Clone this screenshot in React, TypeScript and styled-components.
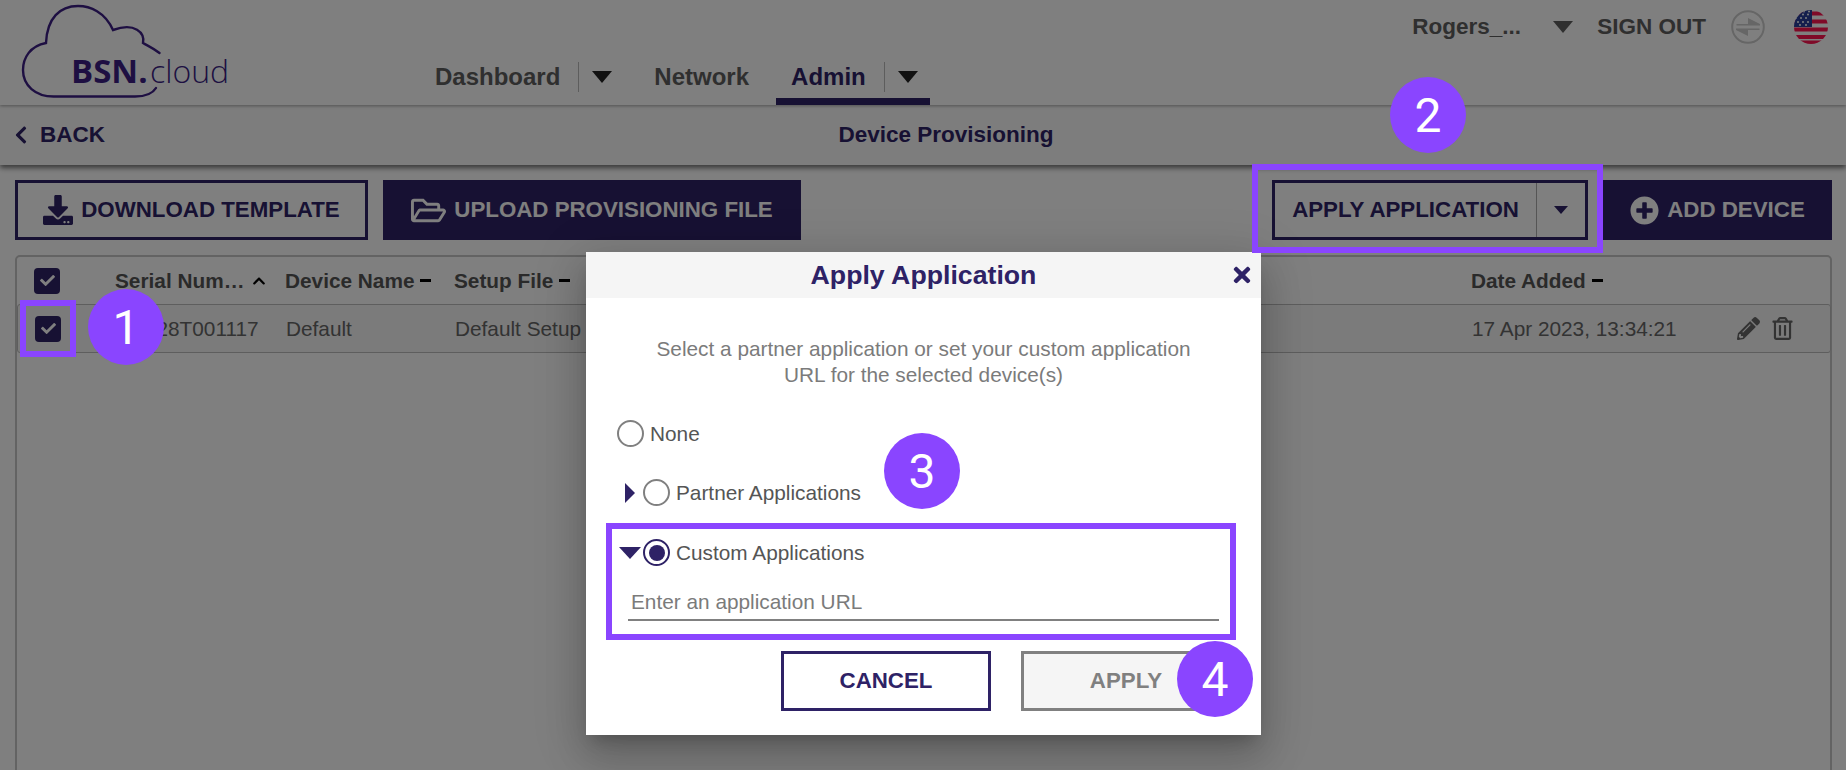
import React from "react";
import styled, { createGlobalStyle } from "styled-components";
import {
  FaCheck,
  FaChevronLeft,
  FaChevronUp,
  FaDownload,
  FaPencilAlt,
  FaPlusCircle,
  FaRegFolderOpen,
  FaRegTrashAlt,
  FaTimes,
} from "react-icons/fa";

const NAVY = "#2e2266";
const PURPLE = "#8a45ff";
const COLUMNS = "98px 170px 169px 1017px 265px 1fr";

const Global = createGlobalStyle`
  html, body { margin: 0; padding: 0; background: #fff; }
  body { font-family: "Liberation Sans", Arial, sans-serif; }
  * { box-sizing: border-box; }
`;

const Page = styled.div`
  position: relative;
  width: 1846px;
  height: 770px;
  overflow: hidden;
  background: #fff;
`;

const TopBar = styled.header`
  display: flex;
  height: 105px;
  background: #fff;
  box-shadow: 0 1px 3px rgba(0, 0, 0, 0.35);
  position: relative;
  z-index: 2;
`;

const LogoSvg = styled.svg`
  flex: none;
  width: 260px;
  height: 105px;
`;

const Nav = styled.nav`
  display: flex;
  align-self: flex-end;
  gap: 15px;
  margin-left: 160px;
`;

const Tab = styled.div<{ $active?: boolean }>`
  display: flex;
  align-items: center;
  height: 51px;
  padding: 2px 12px 0 15px;
  border-bottom: 7px solid ${(p) => (p.$active ? NAVY : "transparent")};
  color: ${(p) => (p.$active ? NAVY : "#5e5e5e")};
  font-size: 24px;
  font-weight: 700;
`;

const TabDivider = styled.span`
  width: 1px;
  height: 30px;
  margin: 0 13px 0 18px;
  background: #bbb;
`;

const Caret = styled.span<{ $w: number; $h: number; $color: string; $dir?: "down" | "right" }>`
  display: inline-block;
  flex: none;
  width: 0;
  height: 0;
  ${(p) =>
    p.$dir === "right"
      ? `border-top: ${p.$w / 2}px solid transparent;
         border-bottom: ${p.$w / 2}px solid transparent;
         border-left: ${p.$h}px solid ${p.$color};`
      : `border-left: ${p.$w / 2}px solid transparent;
         border-right: ${p.$w / 2}px solid transparent;
         border-top: ${p.$h}px solid ${p.$color};`}
`;

const UserArea = styled.div`
  display: flex;
  align-items: center;
  align-self: flex-start;
  height: 54px;
  margin-left: auto;
  padding-right: 18px;
  color: #5e5e5e;
  font-size: 22.5px;
  font-weight: 700;
`;

const UserName = styled.span`
  width: 141px;
`;

const SignOut = styled.span`
  margin: 0 25px 0 24px;
`;

const RoundIcon = styled.svg`
  display: block;
  width: 34px;
  height: 34px;
  flex: none;
`;

const FlagIcon = styled(RoundIcon)`
  margin-left: 29px;
`;

const SubBar = styled.div`
  display: flex;
  align-items: center;
  height: 60px;
  background: #fafafa;
  box-shadow: 0 3px 5px rgba(0, 0, 0, 0.55);
  position: relative;
  z-index: 1;
`;

const Back = styled.div`
  display: flex;
  align-items: center;
  flex: none;
  width: 106px;
  padding-left: 11px;
  gap: 9px;
  color: ${NAVY};
  font-size: 22.5px;
  font-weight: 700;
`;

const PageTitle = styled.div`
  flex: 1;
  padding-right: 60px;
  text-align: center;
  color: ${NAVY};
  font-size: 22.5px;
  font-weight: 700;
`;

const Toolbar = styled.div`
  display: flex;
  gap: 15px;
  padding: 15px 14px 0 15px;
`;

const ToolButton = styled.div<{ $filled?: boolean; $w: number }>`
  display: flex;
  align-items: center;
  justify-content: center;
  gap: 8px;
  width: ${(p) => p.$w}px;
  height: 60px;
  border: 3px solid ${NAVY};
  background: ${(p) => (p.$filled ? NAVY : "transparent")};
  color: ${(p) => (p.$filled ? "#fff" : NAVY)};
  font-size: 22.3px;
  font-weight: 700;
  white-space: nowrap;
`;

const Spacer = styled.div`
  flex: 1;
`;

const SplitButton = styled.div`
  display: flex;
  width: 316px;
  height: 60px;
  margin-right: 0;
  border: 3px solid ${NAVY};
  color: ${NAVY};
  font-size: 22.3px;
  font-weight: 700;
`;

const SplitLabel = styled.div`
  display: flex;
  align-items: center;
  justify-content: center;
  width: 262px;
  border-right: 1px solid #aaa;
`;

const SplitArrow = styled.div`
  flex: 1;
  display: flex;
  align-items: center;
  justify-content: center;
`;

const Card = styled.section`
  height: 560px;
  margin: 15px 14px 0 15px;
  border: 2px solid #c6c6c6;
  border-radius: 5px;
`;

const HeadRow = styled.div`
  display: grid;
  grid-template-columns: ${COLUMNS};
  align-items: center;
  height: 47px;
  color: #555;
  font-size: 20.8px;
  font-weight: 700;
`;

const DataRow = styled.div`
  display: grid;
  grid-template-columns: ${COLUMNS};
  align-items: center;
  height: 49px;
  background: #f6f6f6;
  border: 1px solid #bdbdbd;
  border-radius: 3px;
  color: #666;
  font-size: 20.8px;
  margin-right: -1px;
`;

const CheckCell = styled.div`
  padding-left: 17px;
`;

const HeadCell = styled.div`
  display: flex;
  align-items: center;
  white-space: nowrap;
`;

const Check = styled.span`
  display: flex;
  align-items: center;
  justify-content: center;
  width: 26px;
  height: 26px;
  border-radius: 4px;
  background: ${NAVY};
  color: #fff;
  font-size: 15px;
`;

const SortDash = styled.span`
  width: 11px;
  height: 3px;
  margin-left: 6px;
  background: #000;
`;

const SortUp = styled.span`
  display: flex;
  margin-left: 8px;
  color: #000;
  font-size: 14px;
`;

const Actions = styled.div`
  display: flex;
  align-items: center;
  gap: 11px;
  color: #666;
  font-size: 23px;
`;

const Overlay = styled.div`
  position: absolute;
  inset: 0;
  z-index: 5;
  background: rgba(0, 0, 0, 0.5);
`;

const Modal = styled.div`
  position: absolute;
  left: 586px;
  top: 252px;
  z-index: 6;
  width: 675px;
  height: 483px;
  background: #fff;
  box-shadow: 0 11px 15px -7px rgba(0, 0, 0, 0.2), 0 24px 38px 3px rgba(0, 0, 0, 0.14),
    0 9px 46px 8px rgba(0, 0, 0, 0.12);
`;

const ModalHeader = styled.div`
  display: grid;
  grid-template-columns: 1fr auto 1fr;
  align-items: center;
  height: 46px;
  background: #f5f5f5;
`;

const ModalTitle = styled.div`
  color: ${NAVY};
  font-size: 26.7px;
  font-weight: 700;
`;

const Close = styled.span`
  display: flex;
  justify-self: end;
  padding-right: 7px;
  color: ${NAVY};
  font-size: 24px;
`;

const Description = styled.p`
  margin: 38px 0 0;
  padding: 0 40px;
  text-align: center;
  color: #7b7b7b;
  font-size: 20.8px;
  line-height: 26px;
`;

const Options = styled.div`
  padding-left: 31px;
`;

const OptionRow = styled.div<{ $gap: number }>`
  display: flex;
  align-items: center;
  height: 27px;
  margin-top: ${(p) => p.$gap}px;
  color: #555;
  font-size: 20.8px;
`;

const ArrowSlot = styled.span`
  display: flex;
  justify-content: center;
  width: 26px;
  flex: none;
`;

const Radio = styled.span<{ $checked?: boolean }>`
  display: flex;
  align-items: center;
  justify-content: center;
  flex: none;
  width: 27px;
  height: 27px;
  margin-right: 6px;
  border: 2px solid ${(p) => (p.$checked ? NAVY : "#808080")};
  border-radius: 50%;
  &::after {
    content: "";
    display: ${(p) => (p.$checked ? "block" : "none")};
    width: 16px;
    height: 16px;
    border-radius: 50%;
    background: ${NAVY};
  }
`;

const UrlInput = styled.input`
  display: block;
  width: 591px;
  height: 37px;
  margin: 18px 0 0 11px;
  padding: 0 3px;
  border: 0;
  border-bottom: 2px solid #808080;
  outline: 0;
  background: transparent;
  font-family: inherit;
  font-size: 20.8px;
  &::placeholder {
    color: #7b7b7b;
    opacity: 1;
  }
`;

const Footer = styled.div`
  display: flex;
  justify-content: flex-end;
  gap: 30px;
  margin-top: 30px;
  padding-right: 30px;
`;

const DialogButton = styled.div<{ $disabled?: boolean }>`
  display: flex;
  align-items: center;
  justify-content: center;
  width: 210px;
  height: 60px;
  border: 3px solid ${(p) => (p.$disabled ? "#808080" : NAVY)};
  background: ${(p) => (p.$disabled ? "#f5f5f5" : "#fff")};
  color: ${(p) => (p.$disabled ? "#808080" : NAVY)};
  font-size: 22.3px;
  font-weight: 700;
`;

const Highlight = styled.div<{ $x: number; $y: number; $w: number; $h: number }>`
  position: absolute;
  left: ${(p) => p.$x}px;
  top: ${(p) => p.$y}px;
  width: ${(p) => p.$w}px;
  height: ${(p) => p.$h}px;
  z-index: 7;
  border: 6px solid ${PURPLE};
  pointer-events: none;
`;

const Badge = styled.div<{ $x: number; $y: number }>`
  position: absolute;
  left: ${(p) => p.$x}px;
  top: ${(p) => p.$y}px;
  z-index: 8;
  display: flex;
  align-items: center;
  justify-content: center;
  width: 76px;
  height: 76px;
  border-radius: 50%;
  background: ${PURPLE};
  color: #fff;
  font-family: Roboto, "Liberation Sans", sans-serif;
  font-size: 48px;
  font-weight: 400;
`;

const Logo = () => (
  <LogoSvg viewBox="0 0 260 105" aria-label="BSN.cloud">
    <path
      d="M159.5 53 C153 48 148 46 143 43 C145 33 135 22 113 30 C105 12 90 6 78 6 C60 6 47 18 46 43 C30 46 23 58 23 70 C23 85 35 97 55 96.5 L135 96.5 C147 96.5 153 93 156 88"
      fill="none"
      stroke="#3c1f85"
      strokeWidth="2.4"
      strokeLinecap="round"
    />
    <text x="71" y="83" fontFamily="'Open Sans', sans-serif" fontWeight="700" fontSize="33" fill="#3c1f85">
      BSN.
    </text>
    <text x="150" y="83" fontFamily="'Open Sans', sans-serif" fontWeight="300" fontSize="32" fill="#3c1f85">
      cloud
    </text>
  </LogoSvg>
);

const SwitchIcon = () => (
  <RoundIcon viewBox="0 0 34 34">
    <circle cx="17" cy="17" r="15.8" fill="none" stroke="#ccc" strokeWidth="2" />
    <path d="M5.5 14h23.5v1.6H5.5zM17 8l12 6H17z" fill="#ccc" />
    <path d="M5 18.4h23.5V20H5zM17 26L5 20h12z" fill="#ccc" />
  </RoundIcon>
);

const FLAG_STRIPES = [1.5, 9.5, 17.5, 25, 30.5];
const FLAG_STARS = [
  [4, 12], [9, 12], [14, 12], [7, 8], [12, 8], [4, 4.5], [9, 4.5], [14, 4.5], [10, 1.5], [15, 1.5], [2, 8], [6, 15], [12, 15],
];

const FlagUS = () => (
  <FlagIcon viewBox="0 0 34 34">
    <defs>
      <clipPath id="flag-clip">
        <circle cx="17" cy="17" r="17" />
      </clipPath>
    </defs>
    <g clipPath="url(#flag-clip)">
      <rect width="34" height="34" fill="#fff" />
      {FLAG_STRIPES.map((y) => (
        <rect key={y} x="0" y={y} width="34" height="4" fill="#ff1450" />
      ))}
      <rect width="18" height="17" fill="#2a3f9a" />
      {FLAG_STARS.map(([x, y]) => (
        <circle key={`${x}-${y}`} cx={x} cy={y} r="1" fill="#fff" />
      ))}
    </g>
  </FlagIcon>
);

export default function App() {
  return (
    <Page>
      <Global />
      <TopBar>
        <Logo />
        <Nav>
          <Tab>
            Dashboard
            <TabDivider />
            <Caret $w={20} $h={12} $color="#222" />
          </Tab>
          <Tab>Network</Tab>
          <Tab $active>
            Admin
            <TabDivider />
            <Caret $w={20} $h={12} $color="#222" />
          </Tab>
        </Nav>
        <UserArea>
          <UserName>Rogers_...</UserName>
          <Caret $w={21} $h={12} $color="#5e5e5e" />
          <SignOut>SIGN OUT</SignOut>
          <SwitchIcon />
          <FlagUS />
        </UserArea>
      </TopBar>

      <SubBar>
        <Back>
          <FaChevronLeft size={20} />
          BACK
        </Back>
        <PageTitle>Device Provisioning</PageTitle>
      </SubBar>

      <Toolbar>
        <ToolButton $w={353}>
          <FaDownload size={30} />
          DOWNLOAD TEMPLATE
        </ToolButton>
        <ToolButton $w={418} $filled>
          <FaRegFolderOpen size={35} />
          UPLOAD PROVISIONING FILE
        </ToolButton>
        <Spacer />
        <SplitButton>
          <SplitLabel>APPLY APPLICATION</SplitLabel>
          <SplitArrow>
            <Caret $w={15} $h={8} $color={NAVY} />
          </SplitArrow>
        </SplitButton>
        <ToolButton $w={229} $filled>
          <FaPlusCircle size={29} />
          ADD DEVICE
        </ToolButton>
      </Toolbar>

      <Card>
        <HeadRow>
          <CheckCell>
            <Check>
              <FaCheck />
            </Check>
          </CheckCell>
          <HeadCell>
            Serial Num…
            <SortUp>
              <FaChevronUp />
            </SortUp>
          </HeadCell>
          <HeadCell>
            Device Name
            <SortDash />
          </HeadCell>
          <HeadCell>
            Setup File
            <SortDash />
          </HeadCell>
          <HeadCell>
            Date Added
            <SortDash />
          </HeadCell>
          <div />
        </HeadRow>
        <DataRow>
          <CheckCell>
            <Check>
              <FaCheck />
            </Check>
          </CheckCell>
          <div>D7E28T001117</div>
          <div>Default</div>
          <div>Default Setup</div>
          <div>17 Apr 2023, 13:34:21</div>
          <Actions>
            <FaPencilAlt />
            <FaRegTrashAlt />
          </Actions>
        </DataRow>
      </Card>

      <Overlay />

      <Modal>
        <ModalHeader>
          <span />
          <ModalTitle>Apply Application</ModalTitle>
          <Close>
            <FaTimes />
          </Close>
        </ModalHeader>
        <Description>
          Select a partner application or set your custom application
          <br />
          URL for the selected device(s)
        </Description>
        <Options>
          <OptionRow $gap={32}>
            <Radio />
            None
          </OptionRow>
          <OptionRow $gap={32}>
            <ArrowSlot>
              <Caret $w={20} $h={10} $color={NAVY} $dir="right" />
            </ArrowSlot>
            <Radio />
            Partner Applications
          </OptionRow>
          <OptionRow $gap={33}>
            <ArrowSlot>
              <Caret $w={23} $h={12} $color={NAVY} />
            </ArrowSlot>
            <Radio $checked />
            Custom Applications
          </OptionRow>
          <UrlInput placeholder="Enter an application URL" />
        </Options>
        <Footer>
          <DialogButton>CANCEL</DialogButton>
          <DialogButton $disabled>APPLY</DialogButton>
        </Footer>
      </Modal>

      <Highlight $x={20} $y={300} $w={56} $h={57} />
      <Highlight $x={1252} $y={164} $w={351} $h={89} />
      <Highlight $x={606} $y={523} $w={630} $h={117} />
      <Badge $x={88} $y={289}>1</Badge>
      <Badge $x={1390} $y={77}>2</Badge>
      <Badge $x={884} $y={433}>3</Badge>
      <Badge $x={1177} $y={641}>4</Badge>
    </Page>
  );
}
